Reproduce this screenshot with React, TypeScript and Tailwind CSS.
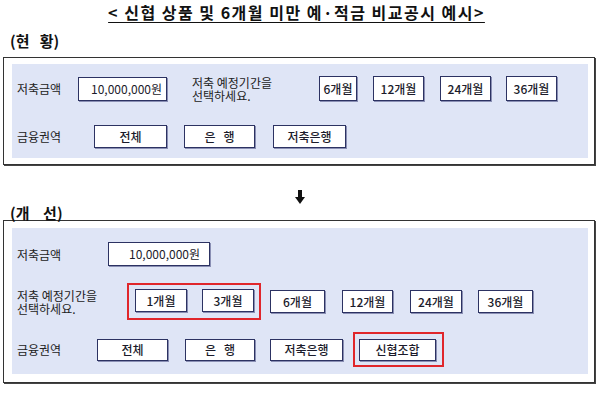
import React from 'react';

// reusable button-ish box
const Box = ({ className = '', children }: { className?: string; children: React.ReactNode }) => (
    <div
        className={`flex shrink-0 items-center justify-center border border-[#2c3262] bg-white text-[12px] font-medium text-[#1b1b2b] whitespace-pre shadow-[1px_1px_0_#8a8fb4] ${className}`}
    >
        {children}
    </div>
);

const Label = ({ className = '', children }: { className?: string; children: React.ReactNode }) => (
    <div className={`shrink-0 text-[12px] leading-[13px] text-[#222] ${className}`}>{children}</div>
);

const App: React.FC = () => {
    return (
        <div className="relative h-[396px] w-[601px] overflow-hidden bg-white font-['Noto_Sans_CJK_KR',sans-serif] text-[#111]">
            {/* Title */}
            <div className="flex h-[30px] justify-center pr-[8px] pt-[2px]">
                <span className="text-[16px] font-bold leading-[20px] tracking-[1.5px] underline decoration-1 underline-offset-[3px] whitespace-pre">
                    {'< 신협 상품 및 6개월 미만 예·적금 비교공시 예시>'}
                </span>
            </div>

            <div className="h-[27px] pl-[10px] pt-[2px] text-[15px] font-bold leading-[18px] whitespace-pre">(현   황)</div>

            {/* Current */}
            <div className="ml-[3px] w-[592px] border border-[#333] px-[6px] pb-[6px] pl-[8px] pt-[6px] shadow-[1px_1px_0_#444]">
                <div className="bg-[#dfe5f6] pb-[10px] pl-[5px] pt-[12px]">
                    <div className="flex h-[25px] items-center">
                        <Label className="w-[61px]">저축금액</Label>
                        <Box className="h-[24px] w-[89px] justify-end pr-[4px] font-normal">10,000,000원</Box>
                        <Label className="ml-[25px] w-[127px]">
                            저축 예정기간을
                            <br />
                            선택하세요.
                        </Label>
                        <Box className="h-[25px] w-[38px]">6개월</Box>
                        <Box className="ml-[16px] h-[25px] w-[51px]">12개월</Box>
                        <Box className="ml-[16px] h-[25px] w-[51px]">24개월</Box>
                        <Box className="ml-[15px] h-[25px] w-[51px]">36개월</Box>
                    </div>
                    <div className="mt-[24px] flex h-[23px] items-center">
                        <Label className="w-[77px]">금융권역</Label>
                        <Box className="h-[23px] w-[73px]">전체</Box>
                        <Box className="ml-[17px] h-[23px] w-[71px]">{'은   행'}</Box>
                        <Box className="ml-[18px] h-[23px] w-[73px]">저축은행</Box>
                    </div>
                </div>
            </div>

            {/* arrow */}
            <div className="mt-[25px] flex h-[14px] justify-center pr-[1px]">
                <svg width="10" height="14" viewBox="0 0 10 14">
                    <rect x="3" y="0" width="4" height="8" fill="#111" />
                    <polygon points="0,7 10,7 5,14" fill="#111" />
                </svg>
            </div>

            <div className="h-[16px] pl-[10px] text-[15px] font-bold leading-[18px] whitespace-pre">(개    선)</div>

            {/* Improved */}
            <div className="ml-[3px] w-[592px] border border-[#333] pb-[8px] pl-[8px] pr-[6px] pt-[7px] shadow-[1px_1px_0_#444]">
                <div className="bg-[#dfe5f6] pb-[7px] pl-[5px] pt-[14px]">
                    <div className="flex h-[24px] items-center">
                        <Label className="w-[91px]">저축금액</Label>
                        <Box className="h-[24px] w-[102px] justify-end pr-[9px] font-normal">10,000,000원</Box>
                    </div>
                    <div className="mt-[17px] flex h-[37px] items-center">
                        <Label className="w-[110px]">
                            저축 예정기간을
                            <br />
                            선택하세요.
                        </Label>
                        <div className="flex h-[37px] w-[134px] shrink-0 items-center border-2 border-[#e0262b] pb-[2px] pl-[6px]">
                            <Box className="h-[23px] w-[52px]">1개월</Box>
                            <Box className="ml-[15px] h-[23px] w-[52px]">3개월</Box>
                        </div>
                        <Box className="ml-[9px] h-[23px] w-[55px]">6개월</Box>
                        <Box className="ml-[17px] h-[23px] w-[51px]">12개월</Box>
                        <Box className="ml-[17px] h-[23px] w-[52px]">24개월</Box>
                        <Box className="ml-[16px] h-[23px] w-[55px]">36개월</Box>
                    </div>
                    <div className="mt-[12px] flex h-[35px] items-center">
                        <Label className="w-[80px]">금융권역</Label>
                        <Box className="h-[22px] w-[71px]">전체</Box>
                        <Box className="ml-[17px] h-[22px] w-[70px]">{'은   행'}</Box>
                        <Box className="ml-[15px] h-[22px] w-[73px]">저축은행</Box>
                        <div className="ml-[10px] flex h-[35px] w-[91px] shrink-0 items-center border-2 border-[#e0262b] pl-[4px]">
                            <Box className="h-[22px] w-[77px]">신협조합</Box>
                        </div>
                    </div>
                </div>
            </div>
        </div>
    );
};

export default App;
